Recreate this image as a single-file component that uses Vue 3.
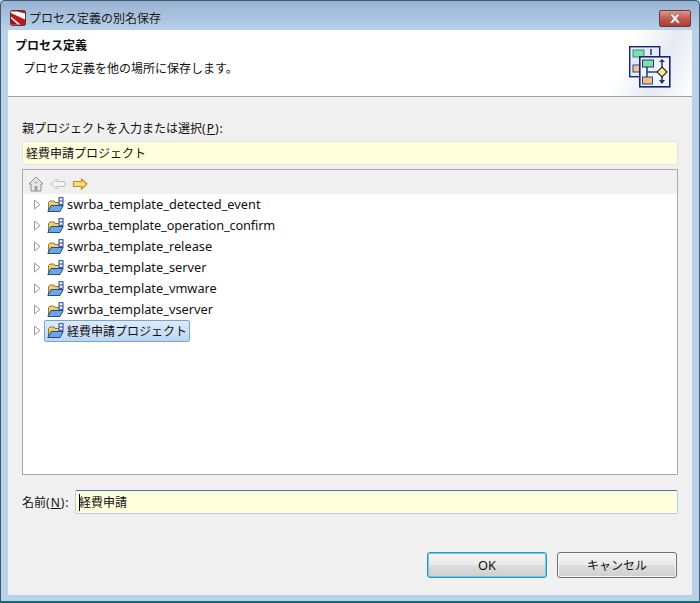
<script setup>
const rows = [
  { label: 'swrba_template_detected_event', kind: 'latin' },
  { label: 'swrba_template_operation_confirm', kind: 'latin tight' },
  { label: 'swrba_template_release', kind: 'latin' },
  { label: 'swrba_template_server', kind: 'latin' },
  { label: 'swrba_template_vmware', kind: 'latin' },
  { label: 'swrba_template_vserver', kind: 'latin' },
  { label: '経費申請プロジェクト', kind: '', selected: true }
]
</script>

<template>
  <div class="window">
    <div class="titlebar">
      <svg class="appicon" width="16" height="16" viewBox="0 0 16 16">
        <rect x="0.5" y="0.5" width="15" height="15" rx="2" fill="#c4161f" stroke="#4a3a3a"/>
        <path d="M1 3 L15 9.5 V3.5 L7 1.5 H1 Z" fill="#fff"/>
        <path d="M1 6.5 L10.5 14.5 H2 L1 14 Z" fill="#f4e4e4"/>
        <path d="M1 8.5 L7.5 14.5 H2 L1 14 Z" fill="#a81018"/>
      </svg>
      <span class="title">プロセス定義の別名保存</span>
      <div class="close">
        <svg width="16" height="11" viewBox="0 0 16 11">
          <path d="M2.5 0.8 H6 L8 3.2 L10 0.8 H13.5 L10 5.5 L13.5 10.2 H10 L8 7.8 L6 10.2 H2.5 L6 5.5 Z" fill="#ece8e8" stroke="#8a5450" stroke-width="0.7"/>
        </svg>
      </div>
    </div>

    <div class="client">
      <header class="banner">
        <div class="banner-text">
          <div class="banner-title">プロセス定義</div>
          <div class="banner-desc">プロセス定義を他の場所に保存します。</div>
        </div>
        <svg class="wizard" width="42" height="42" viewBox="0 0 42 42">
          <rect x="0.7" y="0.7" width="30" height="30" fill="#e4ebf8" stroke="#1b2370" stroke-width="1.4"/>
          <rect x="4" y="4" width="11" height="7" fill="#7fe0ae" stroke="#3a8a90"/>
          <rect x="4" y="19" width="8" height="7" fill="#f8c090" stroke="#2a4a80"/>
          <path d="M22 3 V9" stroke="#24409a" stroke-width="1.6"/>
          <rect x="10.8" y="10.8" width="30" height="30" fill="#eef3fc" stroke="#1b2370" stroke-width="1.6"/>
          <rect x="13.5" y="14" width="11" height="7" fill="#7fe0ae" stroke="#1c3c70"/>
          <rect x="13.5" y="31" width="10" height="7" fill="#f8bb88" stroke="#2a4a80"/>
          <path d="M18 21 V31 M18 26 H28 M33 15 V37" stroke="#24409a" stroke-width="1.6" fill="none"/>
          <path d="M30 16 L33 13 L36 16 Z M30 34 L33 38 L36 34 Z" fill="#1b2f90"/>
          <path d="M33 21 L38 26 L33 31 L28 26 Z" fill="#fce88a" stroke="#2a2a2a" stroke-width="1.1"/>
        </svg>
      </header>

      <main class="body">
        <label class="parent-label">親プロジェクトを入力または選択<span class="mnemonic">(<u>P</u>):</span></label>
        <div class="field parent-field">経費申請プロジェクト</div>

        <section class="tree">
          <div class="toolbar">
            <svg width="16" height="16" viewBox="0 0 16 16">
              <path d="M8 1 L15 8 H13 V15 H3 V8 H1 Z" fill="#e8e8e8" stroke="#8e8e8e"/>
              <rect x="6.5" y="10" width="3" height="5" fill="#a0a0a0"/>
              <rect x="6.5" y="5.5" width="3" height="2" fill="#b4b4b4"/>
            </svg>
            <svg width="16" height="16" viewBox="0 0 16 16">
              <path d="M1 8 L7 3 V5.5 H15 V10.5 H7 V13 Z" fill="#f4f4f4" stroke="#c2c2c2"/>
            </svg>
            <svg width="16" height="16" viewBox="0 0 16 16">
              <path d="M15 8 L9.5 3 V5.5 H1.5 V10.5 H9.5 V13 Z" fill="#fbd98a" stroke="#c88a1e" stroke-width="1.2"/>
            </svg>
          </div>
          <ul class="list">
            <li v-for="r in rows" :key="r.label" class="row">
              <svg class="twisty" width="9" height="11" viewBox="0 0 9 11">
                <path d="M1.5 1 L7 5.5 L1.5 10 Z" fill="#fff" stroke="#9a9a9a"/>
              </svg>
              <span class="item" :class="{ selected: r.selected }">
                <svg class="folder" width="17" height="16" viewBox="0 0 17 16">
                  <path d="M1.5 14 V5.5 L3 4 H7 L8 5.5 H13 V14 Z" fill="#f0cf70" stroke="#8a6a20" stroke-width="0.9"/>
                  <path d="M0.8 14.5 L4 8.5 H16.2 L13 14.5 Z" fill="#6ea6e2" stroke="#1f4c92"/>
                  <rect x="12" y="0.7" width="4" height="6.6" fill="#fff" stroke="#1f3f90"/>
                  <path d="M12 4 H16" stroke="#1f3f90"/>
                </svg>
                <span class="item-label" :class="r.kind">{{ r.label }}</span>
              </span>
            </li>
          </ul>
        </section>

        <div class="name-row">
          <label class="name-label">名前<span class="mnemonic">(<u>N</u>):</span></label>
          <div class="field name-field"><i class="caret"></i>経費申請</div>
        </div>

        <div class="buttons">
          <button class="btn default latin">OK</button>
          <button class="btn">キャンセル</button>
        </div>
      </main>
    </div>
  </div>
</template>

<style>
html, body { margin: 0; background: #b9d1ea; }
</style>

<style scoped>
.window {
  width: 700px;
  height: 603px;
  box-sizing: border-box;
  display: flex;
  flex-direction: column;
  background: linear-gradient(#98b3d2 0, #b9d1ea 30px);
  border: 1px solid #3e5a6c;
  border-bottom: 2px solid #1a6a70;
  border-radius: 5px 5px 0 0;
  padding: 0 7px 6px;
  font-family: "Noto Sans", "Noto Sans CJK JP", sans-serif;
  font-size: 12px;
  color: #111;
  overflow: hidden;
}
.titlebar {
  height: 29px;
  display: flex;
  align-items: center;
  flex: none;
  padding-left: 2px;
}
.appicon { margin-right: 3px; margin-top: 5px; }
.title { font-size: 12px; margin-top: 5px; color: #1a1a1a; }
.close {
  margin-left: auto;
  align-self: flex-start;
  margin-top: 9px;
  margin-right: 1px;
  width: 30px;
  height: 15px;
  border: 1px solid #6e3a38;
  border-radius: 2px;
  background: linear-gradient(#dc9a90, #c05a50 50%, #b03c34);
  display: flex;
  align-items: center;
  justify-content: center;
}
.client {
  flex: 1;
  display: flex;
  flex-direction: column;
  background: #f0f0f0;
  min-height: 0;
}
.banner {
  height: 66px;
  flex: none;
  background: linear-gradient(115deg, #fff 88%, #e6ebf1 94%, #fff 100%);
  border-bottom: 1px solid #a0a0a0;
  display: flex;
  justify-content: space-between;
}
.banner-text { padding-left: 7px; }
.banner-title { font-weight: 700; line-height: 17px; margin-top: 7px; }
.banner-desc { padding-left: 8px; margin-top: 6px; line-height: 18px; }
.wizard { margin: 16px 21px 0 0; }
.body {
  flex: 1;
  display: flex;
  flex-direction: column;
  padding: 0 14px;
  min-height: 0;
}
.parent-label { margin-top: 23px; line-height: 18px; }
.mnemonic { letter-spacing: 1px; }
u { text-underline-offset: 1px; }
.latin { font-size: 12.8px; }
.field {
  background: #ffffdc;
  box-sizing: border-box;
  border: 1px solid #e2e3ea;
  border-radius: 2px;
  display: flex;
  align-items: center;
  white-space: nowrap;
}
.parent-field { height: 24px; margin-top: 3px; padding-left: 3px; }
.tree {
  height: 306px;
  box-sizing: border-box;
  margin-top: 4px;
  border: 1px solid #a9a9a9;
  background: #fff;
  display: flex;
  flex-direction: column;
}
.toolbar {
  height: 24px;
  box-sizing: border-box;
  background: #f0f0f0;
  display: flex;
  align-items: flex-start;
  gap: 6px;
  padding: 6px 0 0 5px;
  flex: none;
}
.list { list-style: none; margin: 0; padding: 0; }
.row {
  height: 21px;
  display: flex;
  align-items: center;
  padding-left: 10px;
}
.twisty { flex: none; }
.item {
  display: inline-flex;
  align-items: center;
  height: 20px;
  margin-left: 2px;
  padding: 0 2px;
  border: 1px solid transparent;
  border-radius: 2px;
  gap: 3px;
}
.item.selected {
  background: linear-gradient(#dcebfb, #bcd6f2);
  border-color: #7da2ce;
}
.item-label { white-space: nowrap; }
.item-label.latin { margin-top: -2px; }
.item-label.tight { letter-spacing: -0.15px; }
.name-row {
  display: flex;
  align-items: center;
  margin-top: 15px;
  height: 24px;
}
.name-label { width: 53px; flex: none; }
.name-field {
  flex: 1;
  height: 24px;
  padding-left: 3px;
  border-color: #b5cfe7;
  border-top-color: #3d7bad;
  position: relative;
}
.caret {
  position: absolute;
  left: 3px;
  top: 3px;
  width: 1px;
  height: 17px;
  background: #000;
}
.buttons {
  display: flex;
  justify-content: flex-end;
  gap: 10px;
  margin-top: 38px;
  padding-right: 1px;
}
.btn {
  width: 120px;
  height: 26px;
  box-sizing: border-box;
  border: 1px solid #707070;
  border-radius: 3px;
  background: linear-gradient(#f3f3f3 0, #ebebeb 48%, #dddddd 52%, #cfcfcf 100%);
  box-shadow: inset 0 0 0 1px #f6f6f6;
  font-family: inherit;
  font-size: 12px;
  color: #111;
  padding: 0;
}
.btn.latin { font-size: 12.8px; }
.btn.default {
  border-color: #3a8fb7;
  box-shadow: inset 0 0 0 1px #62d0f0;
}
</style>
